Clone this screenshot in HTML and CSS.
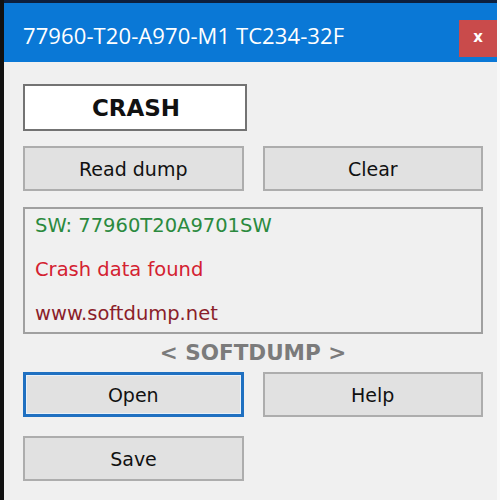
FILE: index.html
```html
<!DOCTYPE html>
<html lang="en">
<head>
    <meta charset="UTF-8">
    <meta name="viewport" content="width=device-width, initial-scale=1.0">
    <title>77960-T20-A970-M1 TC234-32F</title>
    <link rel="stylesheet" href="styles.css">
</head>
<body>
    <div class="window">
        <div class="titlebar">
            <span class="title">77960-T20-A970-M1 TC234-32F</span>
            <button class="close">x</button>
        </div>
        <div class="content">
            <div class="status">CRASH</div>
            <div class="row">
                <button class="button">Read dump</button>
                <button class="button">Clear</button>
            </div>
            <div class="log">
                <p class="sw">SW: 77960T20A9701SW</p>
                <p class="found">Crash data found</p>
                <p class="site">www.softdump.net</p>
            </div>
            <div class="brand">&lt; SOFTDUMP &gt;</div>
            <div class="row">
                <button class="button focused">Open</button>
                <button class="button">Help</button>
            </div>
            <div class="row last">
                <button class="button">Save</button>
            </div>
        </div>
    </div>
</body>
</html>
```

FILE: styles.css
```css
body {
    margin: 0;
    background-color: #f0f0f0;
    font-family: "DejaVu Sans", Verdana, sans-serif;
}
.window {
    height: 500px;
    border-left: 4px solid #111;
    border-right: 3px solid #f9f9f9;
    box-sizing: border-box;
    display: flex;
    flex-direction: column;
}
.titlebar {
    height: 59px;
    border-top: 3px solid #0d1f3d;
    background-color: #0a78d6;
    display: flex;
    align-items: center;
    justify-content: space-between;
    padding-left: 19px;
}
.title {
    color: #fff;
    font-family: "Open Sans", sans-serif;
    font-size: 22px;
    letter-spacing: 0.1px;
    padding-top: 4px;
}
.close {
    width: 38px;
    height: 37px;
    margin-top: 12px;
    border: none;
    background-color: #c94b4b;
    color: #fff;
    font-family: "DejaVu Sans", sans-serif;
    font-weight: bold;
    font-size: 15px;
    padding: 0 0 3px 0;
}
.content {
    padding: 22px 14px 0 19px;
    display: flex;
    flex-direction: column;
}
/* white result field */
.status {
    width: 224px;
    height: 47px;
    box-sizing: border-box;
    border: 2px solid #737373;
    background-color: #fff;
    display: flex;
    align-items: center;
    justify-content: center;
    font-weight: bold;
    font-size: 23px;
    color: #111;
    padding-left: 2px;
}
.row {
    display: flex;
    gap: 19px;
    margin-top: 15px;
}
.row.last {
    margin-top: 19px;
}
.button {
    width: 221px;
    height: 45px;
    box-sizing: border-box;
    border: 2px solid #adadad;
    background-color: #e1e1e1;
    font-family: "DejaVu Sans", Verdana, sans-serif;
    font-size: 19px;
    color: #111;
    padding: 0;
}
.button.focused {
    border: 3px solid #1f70c1;
    box-shadow: inset 0 0 0 1px #e8f1fa;
}
.log {
    margin-top: 16px;
    height: 127px;
    box-sizing: border-box;
    border: 2px solid #a0a0a0;
    padding: 2px 10px;
    font-size: 19.5px;
}
.log p {
    margin: 0;
    height: 44px;
    line-height: 30px;
}
.sw { color: #2b8a3e; }
.found { color: #d42130; }
.site { color: #8b1e2a; }
.brand {
    text-align: center;
    font-weight: bold;
    font-size: 21.5px;
    color: #7b7b7b;
    margin-top: 6px;
    height: 25px;
}
.brand + .row {
    margin-top: 7px;
}
```
